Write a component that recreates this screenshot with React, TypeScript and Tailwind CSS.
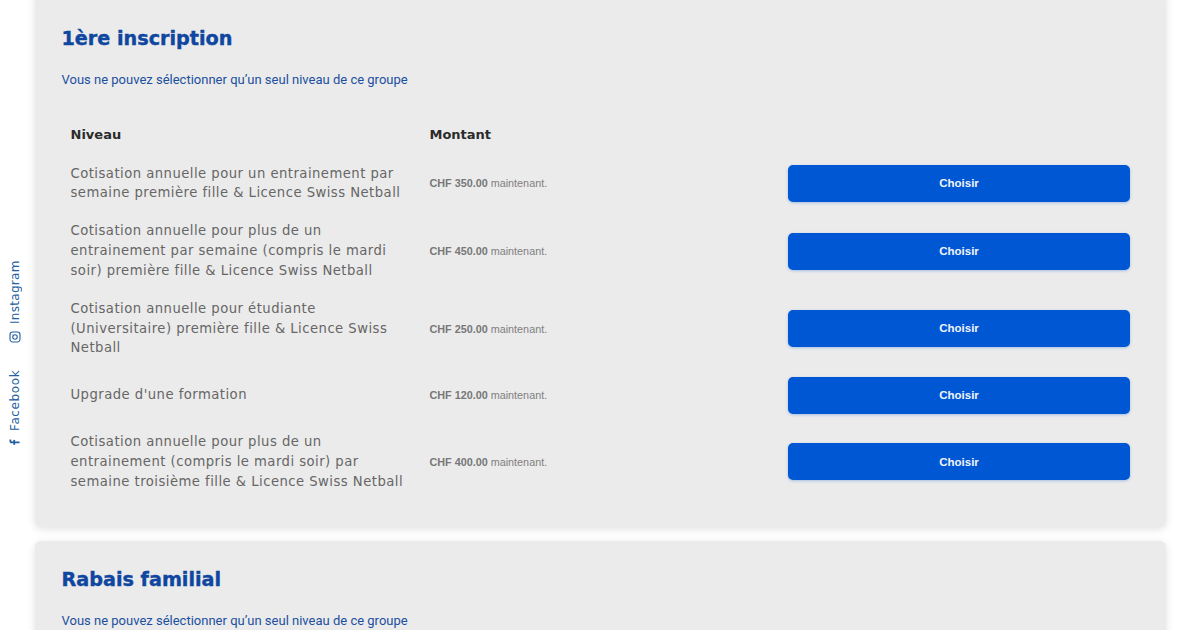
import React from "react";

const rows = [
  { text: "Cotisation annuelle pour un entrainement par semaine première fille & Licence Swiss Netball", price: "CHF 350.00" },
  { text: "Cotisation annuelle pour plus de un entrainement par semaine (compris le mardi soir) première fille & Licence Swiss Netball", price: "CHF 450.00" },
  { text: "Cotisation annuelle pour étudiante (Universitaire) première fille & Licence Swiss Netball", price: "CHF 250.00" },
  { text: "Upgrade d'une formation", price: "CHF 120.00" },
  { text: "Cotisation annuelle pour plus de un entrainement (compris le mardi soir) par semaine troisième fille & Licence Swiss Netball", price: "CHF 400.00" },
];

const heading = "font-['DejaVu_Sans',sans-serif] font-bold text-[#0f46a0] text-[19.2px] leading-[28px] [-webkit-text-stroke:0.4px_#0f46a0]";
const note = "font-['Roboto','Noto_Sans',sans-serif] text-[#1c4f9f] text-[13px] leading-[20px] mt-[17px]";

export default function App() {
  return (
    <div className="relative h-[630px] w-[1200px] overflow-hidden bg-white">
      <div className="absolute left-[8px] top-[260px] flex h-[188px] rotate-180 flex-row items-center justify-between text-[#24609f] [writing-mode:vertical-rl]">
        <span className="flex items-center gap-[6px] font-['DejaVu_Sans',sans-serif] text-[12px] leading-[14px] tracking-[0.6px]">
          <svg width="11" height="11" viewBox="0 0 24 24" className="rotate-90" fill="currentColor">
            <path d="M14.2 23v-9.6h3.4l.6-4h-4V6.900c0-1.200.4-2 2-2h2.200V1.300C18 1.200 16.800 1 15.500 1c-3 0-5.200 1.900-5.200 5.200v3.200H7v4h3.300V23z" />
          </svg>
          Facebook
        </span>
        <span className="flex items-center gap-[7px] font-['DejaVu_Sans',sans-serif] text-[12px] leading-[14px] tracking-[0.3px]">
          <svg width="12" height="12" viewBox="0 0 24 24" className="rotate-90" fill="none" stroke="currentColor" strokeWidth="2.2">
            <rect x="2" y="2" width="20" height="20" rx="5.5" />
            <circle cx="12" cy="12" r="4.5" />
            <circle cx="17.6" cy="6.4" r="0.8" fill="currentColor" stroke="none" />
          </svg>
          Instagram
        </span>
      </div>

      <div className="ml-[35px] mt-[-8px] flex w-[1131px] flex-col gap-[14px]">
        <section className="rounded-[6px] bg-[#ebebeb] pb-[26px] pl-[26.5px] pr-[27px] pt-[33px] shadow-[0_2px_8px_rgba(0,0,0,0.12)]">
          <h2 className={heading}>1ère inscription</h2>
          <p className={note}>Vous ne pouvez sélectionner qu’un seul niveau de ce groupe</p>
          <div className="mt-[35px] flex h-[20px] items-center pl-[9px] font-['DejaVu_Sans',sans-serif] text-[13px] font-bold text-[#2b2b2b]">
            <span className="w-[359px]">Niveau</span>
            <span>Montant</span>
          </div>
          <div className="mt-[9.3px] flex flex-col">
            {rows.map((r) => (
              <div key={r.price} className="flex items-center py-[9.25px] pl-[9px]">
                <div className="w-[359px] pr-[20px] font-['DejaVu_Sans',sans-serif] text-[13.2px] leading-[19.7px] tracking-[0.47px] text-[#666666]">
                  {r.text}
                </div>
                <div className="w-[358.5px] font-['Liberation_Sans',sans-serif] text-[10.8px] text-[#808080]">
                  <b className="font-bold text-[#777777]">{r.price}</b> maintenant.
                </div>
                <button className="h-[37px] w-[342px] rounded-[5px] bg-[#0057d4] pt-[1px] font-['Liberation_Sans',sans-serif] text-[11.5px] font-bold text-[#f0f4fb] shadow-[0_1px_3px_rgba(0,87,212,0.3)]">
                  Choisir
                </button>
              </div>
            ))}
          </div>
        </section>
        <section className="rounded-[6px] bg-[#ebebeb] pb-[40px] pl-[26.5px] pr-[27px] pt-[25px] shadow-[0_2px_8px_rgba(0,0,0,0.12)]">
          <h2 className={heading}>Rabais familial</h2>
          <p className={note}>Vous ne pouvez sélectionner qu’un seul niveau de ce groupe</p>
        </section>
      </div>
    </div>
  );
}
